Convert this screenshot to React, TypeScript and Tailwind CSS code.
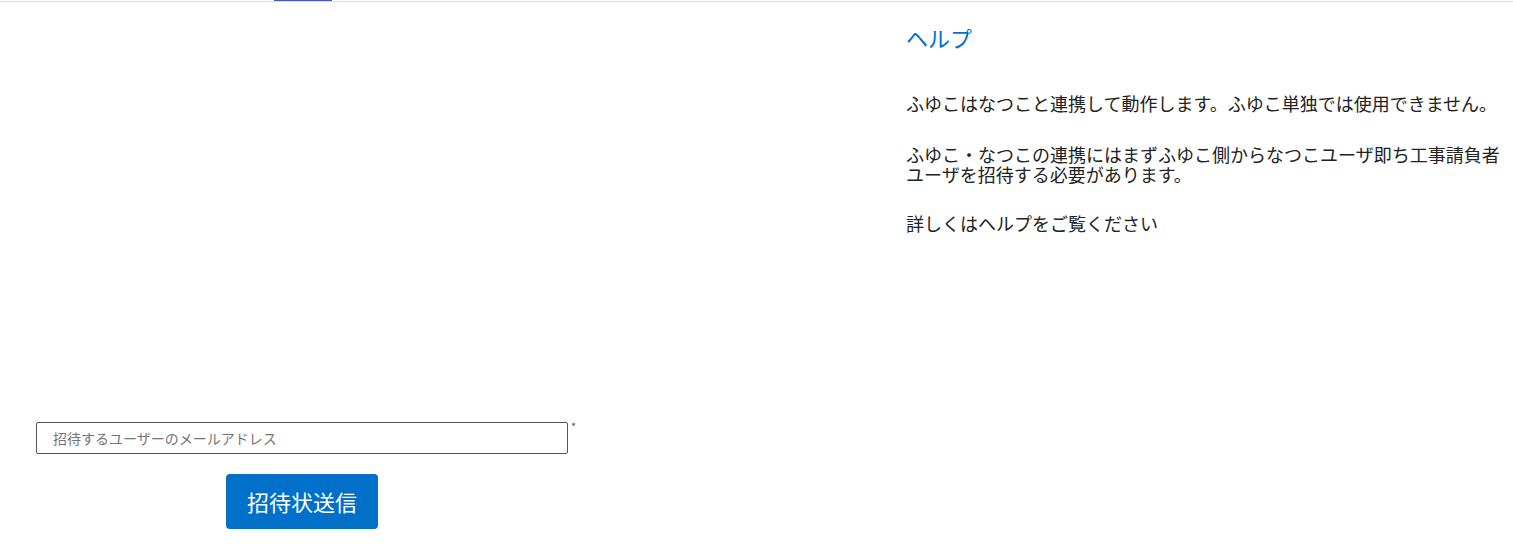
const font = { fontFamily: '"Noto Sans CJK JP", "Noto Sans", sans-serif' };

function TopBar() {
  return (
    <div className="flex h-[2px] w-full border-b border-[#dcdcdc]">
      <div className="w-[274px]" />
      <div className="h-[1px] w-[58px] bg-[#4a54c8]" />
    </div>
  );
}

function InviteForm() {
  return (
    <div className="flex w-[604px] flex-col items-center pt-[420px]">
      <div className="flex w-full items-start pl-[36px]">
        <input
          type="email"
          placeholder="招待するユーザーのメールアドレス"
          className="h-[32px] w-[532px] rounded-[2px] border border-[#555] px-[16px] text-[14px] text-[#222] placeholder:text-[#757575] outline-none"
        />
        <span className="ml-[3px] mt-[-1px] text-[11px] leading-none text-[#b0304a]">*</span>
      </div>
      <button className="mt-[20px] h-[55px] w-[152px] rounded-[4px] bg-[#0070c9] text-[22px] text-white">
        招待状送信
      </button>
    </div>
  );
}

function HelpPanel() {
  return (
    <div className="ml-[302px] w-[598px] pt-[20px] text-[#222]">
      <h2 className="text-[22px] leading-[30px] text-[#0070c9]">ヘルプ</h2>
      <div className="mt-[41px] flex flex-col gap-[31px] text-[18px] leading-[20px]">
        <p>ふゆこはなつこと連携して動作します。ふゆこ単独では使用できません。</p>
        <p>ふゆこ・なつこの連携にはまずふゆこ側からなつこユーザ即ち工事請負者ユーザを招待する必要があります。</p>
        <p className="-mt-[2px]">詳しくはヘルプをご覧ください</p>
      </div>
    </div>
  );
}

export default function App() {
  return (
    <div className="h-[550px] w-full overflow-hidden bg-white" style={font}>
      <TopBar />
      <div className="flex">
        <InviteForm />
        <HelpPanel />
      </div>
    </div>
  );
}
